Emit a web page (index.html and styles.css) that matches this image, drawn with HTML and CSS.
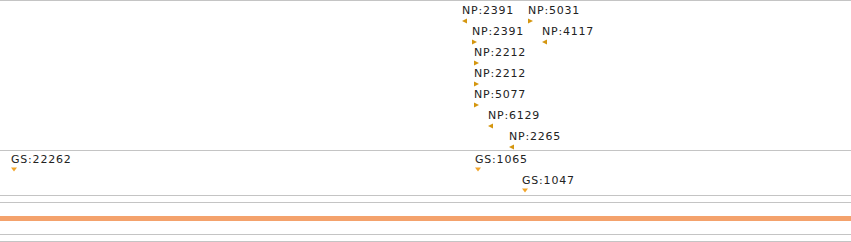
FILE: index.html
```html
<!DOCTYPE html>
<html>
<head>
<meta charset="utf-8">
<link rel="stylesheet" href="styles.css">
</head>
<body>
<div class="view">
  <div class="track track-np">
    <div class="feat" style="left:462px;top:3px"><span class="lbl">NP:2391</span><svg class="tri" width="6" height="6"><polygon points="0,3 5,0.5 5,5.5" class="np"/></svg></div>
    <div class="feat" style="left:528px;top:3px"><span class="lbl">NP:5031</span><svg class="tri" width="6" height="6"><polygon points="0,0.5 5,3 0,5.5" class="np"/></svg></div>
    <div class="feat" style="left:472px;top:24px"><span class="lbl">NP:2391</span><svg class="tri" width="6" height="6"><polygon points="0,0.5 5,3 0,5.5" class="np"/></svg></div>
    <div class="feat" style="left:542px;top:24px"><span class="lbl">NP:4117</span><svg class="tri" width="6" height="6"><polygon points="0,3 5,0.5 5,5.5" class="np"/></svg></div>
    <div class="feat" style="left:474px;top:45px"><span class="lbl">NP:2212</span><svg class="tri" width="6" height="6"><polygon points="0,0.5 5,3 0,5.5" class="np"/></svg></div>
    <div class="feat" style="left:474px;top:66px"><span class="lbl">NP:2212</span><svg class="tri" width="6" height="6"><polygon points="0,0.5 5,3 0,5.5" class="np"/></svg></div>
    <div class="feat" style="left:474px;top:87px"><span class="lbl">NP:5077</span><svg class="tri" width="6" height="6"><polygon points="0,0.5 5,3 0,5.5" class="np"/></svg></div>
    <div class="feat" style="left:488px;top:108px"><span class="lbl">NP:6129</span><svg class="tri" width="6" height="6"><polygon points="0,3 5,0.5 5,5.5" class="np"/></svg></div>
    <div class="feat" style="left:509px;top:129px"><span class="lbl">NP:2265</span><svg class="tri" width="6" height="6"><polygon points="0,3 5,0.5 5,5.5" class="np"/></svg></div>
  </div>
  <div class="track track-gs">
    <div class="feat" style="left:11px;top:2px"><span class="lbl">GS:22262</span><svg class="tri" width="7" height="5"><polygon points="0,0.5 6,0.5 3,4.5" class="gs"/></svg></div>
    <div class="feat" style="left:475px;top:2px"><span class="lbl">GS:1065</span><svg class="tri" width="7" height="5"><polygon points="0,0.5 6,0.5 3,4.5" class="gs"/></svg></div>
    <div class="feat" style="left:522px;top:23px"><span class="lbl">GS:1047</span><svg class="tri" width="7" height="5"><polygon points="0,0.5 6,0.5 3,4.5" class="gs"/></svg></div>
  </div>
  <div class="track track-thin"></div>
  <div class="track track-scale">
    <div class="bar"></div>
  </div>
  <div class="track track-thin2"></div>
  <div class="track track-end"></div>
</div>
</body>
</html>
```
FILE: styles.css
```css
html, body {
  margin: 0;
  padding: 0;
  background: #ffffff;
  overflow: hidden;
}
.view {
  width: 851px;
  height: 242px;
  display: flex;
  flex-direction: column;
  font-family: "DejaVu Sans", "Verdana", sans-serif;
  font-size: 11px;
  color: #222222;
}
.track {
  position: relative;
  box-sizing: border-box;
  border-top: 1px solid #c4c4c4;
  flex: none;
}
.track-np { height: 150px; }
.track-gs { height: 45px; }
.track-thin { height: 7px; }
.track-scale {
  height: 32px;
  padding-top: 13px;
}
.bar {
  height: 5px;
  background: #f4a26c;
}
.track-thin2 { height: 7px; }
.track-end { height: 1px; }
.feat {
  position: absolute;
  display: flex;
  flex-direction: column;
  align-items: flex-start;
}
.lbl {
  line-height: 13px;
  letter-spacing: 0.8px;
  white-space: nowrap;
}
.tri {
  display: block;
  margin-top: 1px;
}
.np { fill: #d4960f; }
.gs { fill: #f2a52a; }
```
